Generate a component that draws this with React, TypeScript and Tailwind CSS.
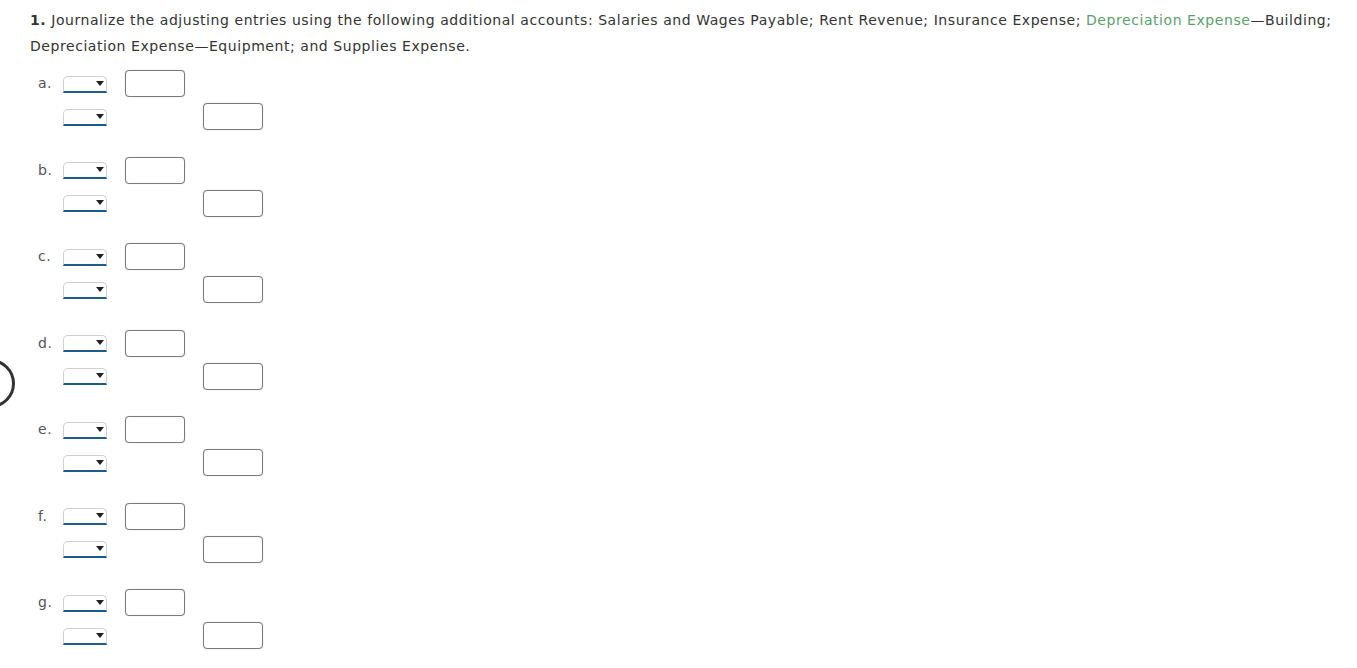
import React from 'react';

const rows = ['a', 'b', 'c', 'd', 'e', 'f', 'g'];

const Select = () => (
    <div className="relative w-[44px] h-[17px] rounded-t-[5px] border border-[#d0d0d0] border-b-2 border-b-[#1d5b8a] bg-white">
        <span className="absolute right-[2px] top-[4px] w-0 h-0 border-l-[4px] border-r-[4px] border-t-[5px] border-l-transparent border-r-transparent border-t-[#222]" />
    </div>
);

const Amount = () => (
    <div className="w-[60px] h-[27px] rounded-[4px] border border-[#7a7a7a] bg-white shadow-[0_0_1px_rgba(0,0,0,0.3)]" />
);

export default function App() {
    return (
        <div className="relative min-h-[668px] bg-white pl-[30px] pt-[7px] font-['DejaVu_Sans',Verdana,sans-serif] text-[14px] text-[#333]">
            {/* partial circle on the left edge */}
            <div className="absolute left-[-34px] top-[359px] w-[49px] h-[49px] rounded-full border-[3px] border-[#333]" />

            <div className="leading-[26px] tracking-[0.56px] whitespace-nowrap">
                <p>
                    <b className="font-bold">1.</b> Journalize the adjusting entries using the following additional accounts: Salaries and Wages Payable; Rent Revenue; Insurance Expense;{' '}
                    <span className="text-[#5c9f6d]">Depreciation Expense</span>—Building;
                </p>
                <p>Depreciation Expense—Equipment; and Supplies Expense.</p>
            </div>

            <div className="mt-[8px] pl-[8px]">
                {rows.map((r) => (
                    <div key={r} className="pb-[20.5px]">
                        <div className="flex items-center h-[33px]">
                            <span className="w-[25px] text-[#555] tracking-[0.5px]">{r}.</span>
                            <div className="w-[62px] pt-[1px]">
                                <Select />
                            </div>
                            <Amount />
                        </div>
                        <div className="flex items-center h-[33px]">
                            <span className="w-[25px]" />
                            <div className="w-[140px] pt-[1px]">
                                <Select />
                            </div>
                            <Amount />
                        </div>
                    </div>
                ))}
            </div>
        </div>
    );
}
